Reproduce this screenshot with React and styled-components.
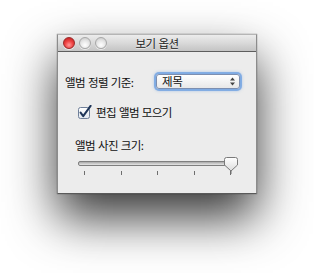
import React from "react";
import styled, { createGlobalStyle } from "styled-components";

const Global = createGlobalStyle`
  html, body { margin: 0; padding: 0; background: #ffffff; }
  body { font-family: "Noto Sans CJK KR", "Noto Sans", sans-serif; }
`;

const Stage = styled.div`
  width: 314px;
  height: 273px;
  padding: 34px 0 0 57px;
  box-sizing: border-box;
  overflow: hidden;
`;

const Window = styled.div`
  width: 200px;
  height: 160px;
  box-sizing: border-box;
  background: #ececec;
  border: 1px solid #8c8c8c;
  border-top-color: #b5b5b5;
  border-bottom-color: #5a5a5a;
  box-shadow: 0 24px 46px rgba(0, 0, 0, 0.78), 0 0 1px rgba(0, 0, 0, 0.5);
  display: flex;
  flex-direction: column;
`;

const TitleBar = styled.div`
  height: 16px;
  flex: none;
  border-bottom: 1px solid #5e5e5e;
  background: linear-gradient(#ececec, #d9d9d9 50%, #c4c4c4);
  position: relative;
  display: flex;
  align-items: center;
  padding-left: 5px;
  gap: 4px;
`;

const Light = styled.div`
  width: 12px;
  height: 12px;
  border-radius: 50%;
  box-sizing: border-box;
  border: 1px solid ${(p) => (p.$red ? "#9a2a2a" : "#a8a8a8")};
  background: ${(p) =>
    p.$red
      ? "radial-gradient(circle at 50% 70%, #ff9a9a 0%, #f04545 45%, #b81818 100%)"
      : "radial-gradient(circle at 50% 70%, #ffffff 0%, #e6e6e6 50%, #c2c2c2 100%)"};
  box-shadow: 0 1px 0 rgba(255, 255, 255, 0.6);
`;

const Title = styled.div`
  position: absolute;
  left: 0;
  right: 0;
  top: 0;
  height: 16px;
  line-height: 16px;
  text-align: center;
  font-size: 11.5px;
  letter-spacing: -0.6px;
  word-spacing: 1px;
  color: #222;
  text-shadow: 0 1px 0 rgba(255, 255, 255, 0.6);
  pointer-events: none;
`;

const Content = styled.div`
  padding: 20px 0 0 0;
  display: flex;
  flex-direction: column;
`;

const SortRow = styled.div`
  display: flex;
  align-items: center;
  height: 19px;
  padding-left: 7px;
`;

const Label = styled.span`
  font-size: 11.5px;
  letter-spacing: -0.6px;
  word-spacing: 1px;
  color: #111;
  line-height: 16px;
  white-space: nowrap;
`;

const SortLabel = styled(Label)`
  width: 88px;
`;

const Popup = styled.div`
  width: 73px;
  height: 13px;
  margin-left: 3px;
  border-radius: 3px;
  border: 1px solid #7d8fb0;
  background: linear-gradient(#ffffff, #f1f1f1 60%, #e8e8e8);
  box-shadow: 0 0 0 2px rgba(110, 160, 225, 0.75), 0 0 3px 2px rgba(110, 160, 225, 0.5);
  display: flex;
  align-items: center;
  justify-content: space-between;
  padding: 0 4px 0 5px;
  box-sizing: content-box;
`;

const PopupText = styled.span`
  font-size: 11.5px;
  letter-spacing: -0.4px;
  line-height: 13px;
  color: #111;
`;

const CheckRow = styled.div`
  display: flex;
  align-items: center;
  gap: 4px;
  margin-top: 14px;
  padding-left: 20px;
  height: 14px;
`;

const SizeLabel = styled(Label)`
  margin-top: 18px;
  padding-left: 17px;
  display: block;
`;

const Slider = styled.div`
  position: relative;
  margin: 4px 0 0 20px;
  width: 160px;
  height: 20px;
`;

const Track = styled.div`
  position: absolute;
  left: 0;
  top: 4px;
  width: 152px;
  height: 3px;
  border-radius: 2px;
  border: 1px solid #7f7f7f;
  background: linear-gradient(#a8a8a8, #d0d0d0 60%, #e6e6e6);
`;

const Ticks = styled.div`
  position: absolute;
  left: 6px;
  right: 7px;
  top: 14px;
  display: flex;
  justify-content: space-between;
`;

const Tick = styled.div`
  width: 1px;
  height: 4px;
  background: #6e6e6e;
`;

const Thumb = styled.svg`
  position: absolute;
  left: 146px;
  top: 0px;
`;

function Checkbox() {
  return (
    <svg width="14" height="15" viewBox="0 0 14 15">
      <defs>
        <linearGradient id="cb" x1="0" y1="0" x2="0" y2="1">
          <stop offset="0" stopColor="#ffffff" />
          <stop offset="1" stopColor="#dfe6ef" />
        </linearGradient>
      </defs>
      <rect x="0.5" y="2.5" width="11" height="11" rx="2" fill="url(#cb)" stroke="#6f7f99" />
      <path d="M2.6 7.6 L5.2 11.2 L12.6 0.8" fill="none" stroke="#1e3559" strokeWidth="2" strokeLinecap="round" strokeLinejoin="round" />
    </svg>
  );
}

function Arrows() {
  return (
    <svg width="5" height="9" viewBox="0 0 5 9">
      <path d="M0 3.5 L2.5 0.5 L5 3.5 Z" fill="#444" />
      <path d="M0 5.5 L2.5 8.5 L5 5.5 Z" fill="#444" />
    </svg>
  );
}

export default function App() {
  return (
    <>
      <Global />
      <Stage>
        <Window>
          <TitleBar>
            <Light $red />
            <Light />
            <Light />
            <Title>보기 옵션</Title>
          </TitleBar>
          <Content>
            <SortRow>
              <SortLabel>앨범 정렬 기준:</SortLabel>
              <Popup>
                <PopupText>제목</PopupText>
                <Arrows />
              </Popup>
            </SortRow>
            <CheckRow>
              <Checkbox />
              <Label>편집 앨범 모으기</Label>
            </CheckRow>
            <SizeLabel>앨범 사진 크기:</SizeLabel>
            <Slider>
              <Track />
              <Ticks>
                {[0, 1, 2, 3, 4].map((i) => (
                  <Tick key={i} />
                ))}
              </Ticks>
              <Thumb width="14" height="17" viewBox="0 0 14 17">
                <defs>
                  <linearGradient id="th" x1="0" y1="0" x2="0" y2="1">
                    <stop offset="0" stopColor="#ffffff" />
                    <stop offset="1" stopColor="#dcdcdc" />
                  </linearGradient>
                </defs>
                <path d="M2.5 0.5 H11.5 Q13.5 0.5 13.5 2.5 V8 L7 14 L0.5 8 V2.5 Q0.5 0.5 2.5 0.5 Z" fill="url(#th)" stroke="#7a7a7a" />
                <rect x="6.5" y="14" width="1" height="3" fill="#6e6e6e" />
              </Thumb>
            </Slider>
          </Content>
        </Window>
      </Stage>
    </>
  );
}
